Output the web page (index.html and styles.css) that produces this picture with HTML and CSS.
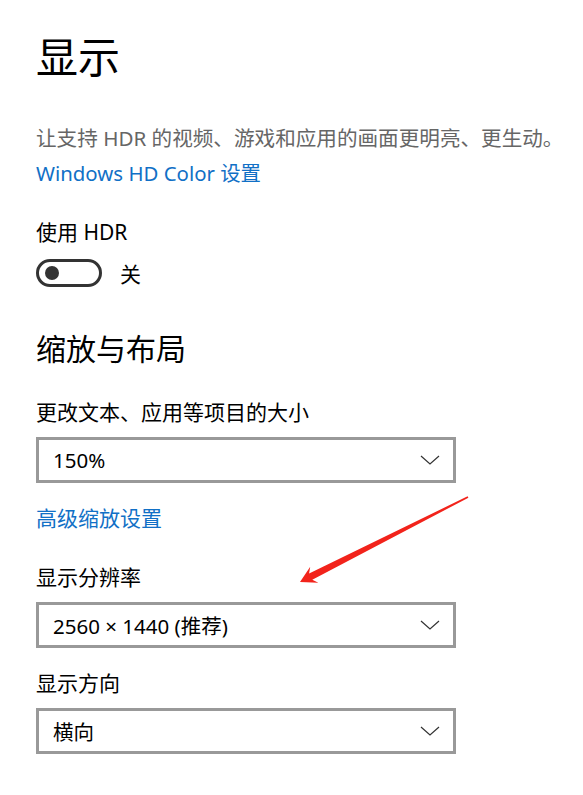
FILE: index.html
```html
<!DOCTYPE html>
<html lang="zh-CN">
<head>
  <meta charset="UTF-8">
  <meta name="viewport" content="width=device-width, initial-scale=1.0">
  <title>显示</title>
  <link rel="stylesheet" href="styles.css">
</head>
<body>
  <div class="page">
    <h1 class="page-title">显示</h1>
    <p class="desc">让支持 HDR 的视频、游戏和应用的画面更明亮、更生动。</p>
    <a class="link link-hdcolor" href="#">Windows HD Color 设置</a>

    <div class="label label-hdr">使用 HDR</div>
    <div class="toggle-row">
      <span class="toggle"><span class="knob"></span></span>
      <span class="toggle-text">关</span>
    </div>

    <h2 class="section-title">缩放与布局</h2>

    <div class="label label-scale">更改文本、应用等项目的大小</div>
    <div class="select">
      <span>150%</span>
      <svg class="chevron" width="20" height="10" viewBox="0 0 20 10"><polyline points="1,1 10,9 19,1" fill="none" stroke="#333" stroke-width="1.2"/></svg>
    </div>

    <a class="link link-advanced" href="#">高级缩放设置</a>

    <div class="label label-res">显示分辨率</div>
    <div class="select">
      <span>2560 × 1440 (推荐)</span>
      <svg class="chevron" width="20" height="10" viewBox="0 0 20 10"><polyline points="1,1 10,9 19,1" fill="none" stroke="#333" stroke-width="1.2"/></svg>
    </div>

    <div class="label label-orient">显示方向</div>
    <div class="select">
      <span>横向</span>
      <svg class="chevron" width="20" height="10" viewBox="0 0 20 10"><polyline points="1,1 10,9 19,1" fill="none" stroke="#333" stroke-width="1.2"/></svg>
    </div>

    <!-- annotation arrow drawn over the page -->
    <svg class="arrow" width="583" height="795" viewBox="0 0 583 795">
      <polygon fill="#f2231b" points="468.4,497.7 312.3,579.7 318.4,582.8 300,582 310.2,566.8 309.1,573.5 467.6,496.3"/>
    </svg>
  </div>
</body>
</html>
```

FILE: styles.css
```css
body {
  margin: 0;
  padding: 0;
  background-color: #fff;
  font-family: "Noto Sans", "Noto Sans CJK SC", sans-serif;
  color: #000;
}
.page {
  position: relative;
  padding: 32px 0 0 36px;
  min-height: 763px;
}
.page-title {
  margin: 0;
  font-size: 42px;
  font-weight: 400;
  line-height: 50px;
}
.desc {
  margin: 42px 0 0;
  font-size: 20.6px;
  line-height: 28px;
  color: #666;
  white-space: nowrap;
}
.link {
  display: block;
  font-size: 20.4px;
  line-height: 28px;
  color: #1170c6;
  text-decoration: none;
}
.link-hdcolor {
  margin-top: 7px;
}
.link-advanced {
  margin-top: 21px;
  font-size: 21px;
}
.label {
  font-size: 21px;
  line-height: 28px;
}
.label-hdr {
  margin-top: 31px;
}
.label-scale {
  margin-top: 29px;
}
.label-res {
  margin-top: 31px;
}
.label-orient {
  margin-top: 21px;
}
.toggle-row {
  display: flex;
  align-items: center;
  gap: 18px;
  margin-top: 13px;
  height: 28px;
}
.toggle {
  box-sizing: border-box;
  display: flex;
  align-items: center;
  width: 66px;
  height: 28px;
  border: 3px solid #333;
  border-radius: 14px;
  padding-left: 6px;
}
.knob {
  width: 14px;
  height: 14px;
  border-radius: 50%;
  background: #333;
}
.toggle-text {
  font-size: 21px;
}
.section-title {
  margin: 42px 0 0;
  font-size: 30px;
  font-weight: 400;
  line-height: 40px;
}
.select {
  box-sizing: border-box;
  display: flex;
  align-items: center;
  justify-content: space-between;
  width: 420px;
  height: 46px;
  margin-top: 11px;
  border: 3px solid #999;
  padding: 0 13px 0 14px;
  font-size: 20.5px;
}
.chevron {
  display: block;
}
.arrow {
  position: absolute;
  left: 0;
  top: 0;
  pointer-events: none;
}
```
